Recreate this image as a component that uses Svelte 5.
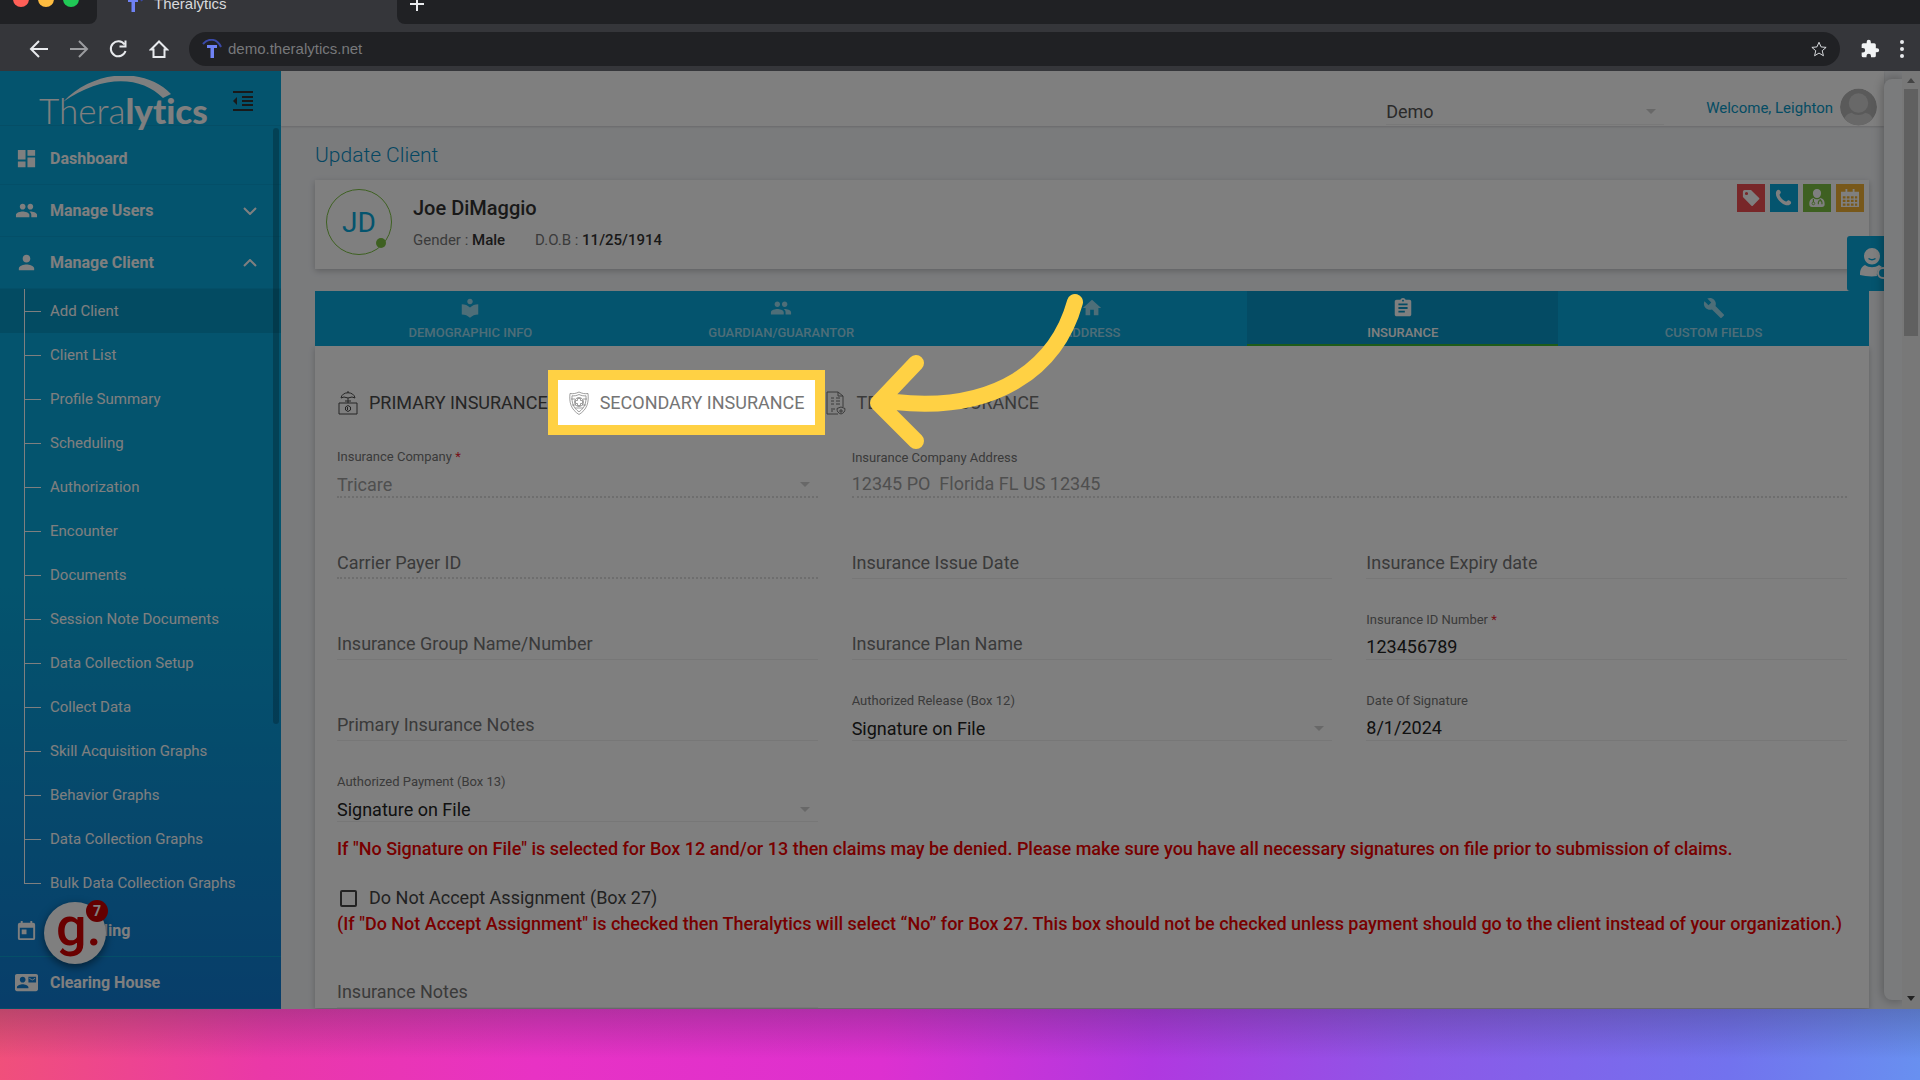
<script lang="ts">
	const clientLinks = [
		"Add Client",
		"Client List",
		"Profile Summary",
		"Scheduling",
		"Authorization",
		"Encounter",
		"Documents",
		"Session Note Documents",
		"Data Collection Setup",
		"Collect Data",
		"Skill Acquisition Graphs",
		"Behavior Graphs",
		"Data Collection Graphs",
		"Bulk Data Collection Graphs"
	];

	const icons = {
		dashboard: "M3 13h8V3H3v10zm0 8h8v-6H3v6zm10 0h8V11h-8v10zm0-18v6h8V3h-8z",
		people:
			"M16 11c1.66 0 2.99-1.34 2.99-3S17.66 5 16 5s-3 1.34-3 3 1.34 3 3 3zm-8 0c1.66 0 2.99-1.34 2.99-3S9.66 5 8 5 5 6.34 5 8s1.34 3 3 3zm0 2c-2.33 0-7 1.17-7 3.5V19h14v-2.500c0-2.330-4.670-3.500-7-3.500zm8 0c-.29 0-.62.02-.97.05 1.160.84 1.970 1.970 1.970 3.450V19h6v-2.500c0-2.330-4.670-3.500-7-3.500z",
		person: "M12 12c2.210 0 4-1.790 4-4s-1.790-4-4-4-4 1.790-4 4 1.790 4 4 4zm0 2c-2.670 0-8 1.340-8 4v2h16v-2c0-2.660-5.330-4-8-4z",
		event: "M19 4h-1V2h-2v2H8V2H6v2H5a2 2 0 0 0-2 2v14a2 2 0 0 0 2 2h14a2 2 0 0 0 2-2V6a2 2 0 0 0-2-2zm0 16H5V9h14v11zM7 11h5v5H7z",
		mail: "M21 8V7l-3 2-3-2v1l3 2 3-2zm1-5H2C.9 3 0 3.900 0 5v14c0 1.100.9 2 2 2h20c1.100 0 2-.9 2-2V5c0-1.100-.9-2-2-2zM8 6c1.660 0 3 1.340 3 3s-1.340 3-3 3-3-1.340-3-3 1.340-3 3-3zm6 12H2v-1c0-2 4-3.100 6-3.100s6 1.100 6 3.100v1zm8-6h-8V6h8v6z",
		reader:
			"M12 11.550C9.640 9.350 6.480 8 3 8v11c3.480 0 6.640 1.350 9 3.550 2.360-2.190 5.520-3.550 9-3.550V8c-3.480 0-6.640 1.350-9 3.550zM12 8c1.660 0 3-1.340 3-3s-1.340-3-3-3-3 1.340-3 3 1.340 3 3 3z",
		home: "M10 20v-6h4v6h5v-8h3L12 3 2 12h3v8z",
		assignment:
			"M19 3h-4.180C14.400 1.840 13.300 1 12 1s-2.400.84-2.820 2H5c-1.100 0-2 .9-2 2v14c0 1.100.9 2 2 2h14c1.100 0 2-.9 2-2V5c0-1.100-.9-2-2-2zm-7 0c.55 0 1 .45 1 1s-.45 1-1 1-1-.45-1-1 .45-1 1-1zm2 14H7v-2h7v2zm3-4H7v-2h10v2zm0-4H7V7h10v2z",
		build: "M22.700 19l-9.100-9.100c.9-2.300.4-5-1.500-6.900-2-2-5-2.400-7.400-1.300L9 6 6 9 1.600 4.700C.4 7.100.9 10.100 2.900 12.100c1.900 1.900 4.600 2.400 6.900 1.500l9.100 9.100c.4.4 1 .4 1.400 0l2.300-2.300c.5-.4.5-1.100.1-1.400z",
		phone: "M2 2.500C4.500-.4 7 1.500 7.800 4.500c.4 1.400-2 2.300-1.700 3.500.9 3.300 5.200 7.800 8.300 8.600 1.300.3 2.400-2.200 3.800-1.700 3.200 1.100 4.700 3.600 1.800 5.800C12.800 26-2.500 11.400 2 2.500z"
	};

	const tabs = [
		{ label: "DEMOGRAPHIC INFO", icon: icons.reader },
		{ label: "GUARDIAN/GUARANTOR", icon: icons.people },
		{ label: "ADDRESS", icon: icons.home },
		{ label: "INSURANCE", icon: icons.assignment },
		{ label: "CUSTOM FIELDS", icon: icons.build }
	];

	let activeTab = $state("INSURANCE");
	let activeLink = $state("Add Client");
	let insurance = $state("primary");
	let noAssignment = $state(false);
</script>

{#snippet icon(d: string)}
	<svg class="icon" viewBox="0 0 24 24" aria-hidden="true"><path {d} fill-rule="evenodd" /></svg>
{/snippet}

{#snippet favicon()}
	<svg class="favicon" viewBox="0 0 20 20" aria-hidden="true">
		<path d="M1 5C6-1 15-1 19 8" fill="none" stroke="#3a49a8" stroke-width="2" />
		<path d="M5 6h10v3h-3v10H8.500V9H5z" fill="#6f82f4" />
	</svg>
{/snippet}

{#snippet textField(id: string, label: string, value = "", disabled = false, required = false)}
	<div class="field" class:disabled>
		{#if value}
			<label for={id}>{label} {#if required}<span class="req">*</span>{/if}</label>
		{/if}
		<div class="control" class:filled={value !== ""}>
			<input {id} type="text" {value} {disabled} placeholder={value ? "" : label} aria-label={label} />
		</div>
	</div>
{/snippet}

{#snippet selectField(id: string, label: string, value: string, disabled = false, required = false)}
	<div class="field" class:disabled>
		<label for={id}>{label} {#if required}<span class="req">*</span>{/if}</label>
		<div class="control picker">
			<select {id} {disabled}><option>{value}</option></select>
			<span class="caret"></span>
		</div>
	</div>
{/snippet}

<div class="window">
	<header class="chrome">
		<div class="strip">
			<div class="lights"><i class="red"></i><i class="yellow"></i><i class="green"></i></div>
			<div class="browser-tab">{@render favicon()}<span>Theralytics</span></div>
			<div class="strip-rest">
				<button aria-label="New tab">
					<svg viewBox="0 0 16 16" width="16" height="16"><path d="M8 1v14M1 8h14" fill="none" stroke="#e8eaed" stroke-width="2" /></svg>
				</button>
			</div>
		</div>
		<div class="toolbar">
			<button aria-label="Back"><svg viewBox="0 0 20 20"><path d="M19 10H2M10 2l-8 8 8 8" stroke="#e8eaed" /></svg></button>
			<button aria-label="Forward"><svg viewBox="0 0 20 20"><path d="M1 10h17M10 2l8 8-8 8" stroke="#9b9c9f" /></svg></button>
			<button aria-label="Reload"><svg viewBox="0 0 20 20"><path d="M15.500 5.500A7.500 7.500 0 1 0 16.500 12M16.500 1.500v6h-6" stroke="#e8eaed" /></svg></button>
			<button aria-label="Home"><svg viewBox="0 0 20 20"><path d="M10 2.500L2 10.500h2.500V18h11v-7.500H18z" stroke="#e8eaed" /></svg></button>
			<div class="address">
				{@render favicon()}
				<input type="text" value="demo.theralytics.net" aria-label="Address" />
				<button aria-label="Bookmark"><svg viewBox="0 0 20 20"><path d="M10 2.500l2.300 5.200 5.600.5-4.300 3.700 1.300 5.600-4.900-3-4.900 3 1.300-5.600L2.100 8.200l5.600-.5z" stroke="#e8eaed" /></svg></button>
			</div>
			<button aria-label="Extensions">
				<svg viewBox="0 0 24 24"><path fill="#f1f3f4" d="M20.500 11H19V7a2 2 0 0 0-2-2h-4V3.500a2.500 2.500 0 0 0-5 0V5H4a2 2 0 0 0-2 2v3.800h1.500a2.700 2.700 0 0 1 0 5.400H2V20a2 2 0 0 0 2 2h3.800v-1.500a2.700 2.700 0 0 1 5.400 0V22H17a2 2 0 0 0 2-2v-4h1.500a2.500 2.500 0 0 0 0-5z" /></svg>
			</button>
			<button class="dots" aria-label="Menu"><i></i><i></i><i></i></button>
		</div>
	</header>

	<div class="viewport">
		<aside class="sidebar">
			<div class="brand">
				<a class="logo" href="#home">
					<span class="thin">Thera</span><span class="thick">lytics</span>
					<svg class="swoosh" viewBox="0 0 110 28" aria-hidden="true"><path d="M0 26C32-8 84-8 108 18l-8 4C78 0 40-2 0 26z" fill="#fff" /></svg>
				</a>
				<button class="collapse" aria-label="Collapse menu">
					<svg viewBox="0 0 20 20"><path d="M0 0h20v2H0zM9 5h11v2H9zM9 9h11v2H9zM9 13h11v2H9zM0 18h20v2H0zM4 6v8l-4-4z" /></svg>
				</button>
			</div>
			<nav class="menu">
				<a class="item" href="#dashboard">{@render icon(icons.dashboard)}<span>Dashboard</span></a>
				<a class="item" href="#users">
					{@render icon(icons.people)}<span>Manage Users</span>
					<svg class="chev" viewBox="0 0 14 8"><path d="M1 1l6 6 6-6" /></svg>
				</a>
				<a class="item" href="#client">
					{@render icon(icons.person)}<span>Manage Client</span>
					<svg class="chev" viewBox="0 0 14 8"><path d="M1 7l6-6 6 6" /></svg>
				</a>
				<ul class="sub">
					{#each clientLinks as link}
						<li class:active={link === activeLink}>
							<a href="#client" onclick={() => (activeLink = link)}>{link}</a>
						</li>
					{/each}
				</ul>
				<a class="item" href="#scheduling">{@render icon(icons.event)}<span>Scheduling</span></a>
				<a class="item" href="#clearing">{@render icon(icons.mail)}<span>Clearing House</span></a>
			</nav>
			<div class="menu-thumb"></div>
			<button class="guide" aria-label="Open guides">
				<span class="g">g.</span>
				<span class="count">7</span>
			</button>
		</aside>

		<main class="main">
			<div class="topbar">
				<div class="org">
					<select aria-label="Organization"><option>Demo</option></select>
					<span class="caret"></span>
				</div>
				<a class="welcome" href="#profile">Welcome, Leighton</a>
				<svg class="avatar" viewBox="0 0 38 38" aria-hidden="true">
					<defs><clipPath id="round"><circle cx="19" cy="19" r="19" /></clipPath></defs>
					<g clip-path="url(#round)">
						<circle cx="19" cy="19" r="19" fill="#b4b4b4" />
						<circle cx="19" cy="15" r="10" fill="#d0d0d0" />
						<path d="M2 38c2-10 6-12 10-13 4 3 10 3 14 0 4 1 8 3 10 13z" fill="#d0d0d0" />
					</g>
				</svg>
			</div>

			<div class="content">
				<h1>Update Client</h1>
				<section class="client card">
					<div class="initials">JD<i></i></div>
					<div class="who">
						<h2>Joe DiMaggio</h2>
						<p>
							<span>Gender : <b>Male</b></span>
							<span>D.O.B : <b>11/25/1914</b></span>
						</p>
					</div>
					<div class="actions">
						<button class="tag" aria-label="Tags">
							<svg viewBox="0 0 20 20"><path fill-rule="evenodd" d="M1 3a2 2 0 0 1 2-2h7l9 9a1 1 0 0 1 0 1.500L12 18.500a1 1 0 0 1-1.500 0L1 9zm4 .2a1.800 1.800 0 1 0 0 3.600 1.800 1.800 0 0 0 0-3.600z" /></svg>
						</button>
						<button class="call" aria-label="Call">{@render icon(icons.phone)}</button>
						<button class="doctor" aria-label="Provider">
							<svg viewBox="0 0 20 20">
								<path d="M10 0a4.500 4.500 0 0 1 4.500 5c0 3-2 5-4.500 5S5.500 8 5.500 5A4.500 4.500 0 0 1 10 0zM6 10c2 2 6 2 8 0 4 1 4.500 4 4.500 7 0 2-1 3-3 3h-11c-2 0-3-1-3-3 0-3 .5-6 4.500-7z" />
								<path d="M6 11v5M13.500 11v2M11.500 17v-2a2 2 0 0 1 4 0v2" fill="none" stroke="#7cc142" stroke-width="1.300" />
								<circle cx="6" cy="16" r="1.500" fill="#fff" stroke="#7cc142" />
							</svg>
						</button>
						<button class="cal" aria-label="Calendar">
							<svg viewBox="0 0 20 20"><path fill-rule="evenodd" d="M5 0h2v3h6V0h2v3h5v17H0V3h5zM2 8v2.500h3V8zm4.500 0v2.500H9.500V8zm4.500 0v2.500h3V8zm4.500 0v2.500H18V8zM2 12v2.500h3V12zm4.500 0v2.500H9.500V12zm4.500 0v2.500h3V12zm4.500 0v2.500H18V12zM2 16v2.500h3V16zm4.500 0v2.500H9.500V16zm4.500 0v2.500h3V16zm4.500 0v2.500H18V16z" /></svg>
						</button>
					</div>
				</section>

				<div class="tabs">
					{#each tabs as tab}
						<button class:active={tab.label === activeTab} onclick={() => (activeTab = tab.label)}>
							{@render icon(tab.icon)}
							<span>{tab.label}</span>
						</button>
					{/each}
				</div>

				<form class="card body">
					<div class="plans">
						<button type="button" class:current={insurance === "primary"} onclick={() => (insurance = "primary")}>
							<svg viewBox="0 0 20 24"><path d="M1 12h18v11H1zM10 0v2M3 7c1-7 13-7 14 0l-3-1-4 1-4-1zM10 7v5M7 10h6M10 14.500l2.500 1.500v3L10 20.500 7.500 19v-3zM9.500 16v3" /></svg>
							<span>PRIMARY INSURANCE</span>
						</button>
						<button type="button" class:current={insurance === "secondary"} onclick={() => (insurance = "secondary")}>
							<svg class="shield" viewBox="0 0 20 24">
								<path d="M10 1c3 1.500 6 2 9 1.500 1 9-1 16-9 21-8-5-10-12-9-21C4 3 7 2.500 10 1z" />
								<path d="M10 3.500c2.500 1.200 4.500 1.500 7 1.300.4 7-1.500 12.500-7 16-5.500-3.500-7.400-9-7-16 2.500.2 4.500-.1 7-1.300z" />
								<circle cx="10" cy="11" r="4.500" />
								<path d="M8.500 7.500h3v2h2v3h-2v2h-3v-2h-2v-3h2zM2 8h4M14 8h4M3 14h4M13 14h4M6 17h8" />
							</svg>
							<span>SECONDARY INSURANCE</span>
							<i class="spotlight"></i>
							<svg class="pointer" viewBox="0 0 230 170" aria-hidden="true">
								<path d="M215 17C197 82 137 128 35 117M56 78L18 118l38 38" />
							</svg>
						</button>
						<button type="button" class:current={insurance === "tertiary"} onclick={() => (insurance = "tertiary")}>
							<svg viewBox="0 0 20 24"><path d="M12 23H1V1h11l5 4v11M12 1v4h5M5 7h3M10 7h4M5 10h3M10 10h4M5 13h3M10 13h4M5 18h4M5 20h2M15 16l4 1.500c0 3-1 4.500-4 5.500-3-1-4-2.500-4-5.500zM15 18v4M13 20h4" /></svg>
							<span>TERTIARY INSURANCE</span>
						</button>
					</div>

					<div class="grid">
						{@render selectField("company", "Insurance Company", "Tricare", true, true)}
						<div class="wide">{@render textField("address", "Insurance Company Address", "12345 PO  Florida FL US 12345", true)}</div>
						<div class="dotted">{@render textField("payer", "Carrier Payer ID")}</div>
						{@render textField("issue", "Insurance Issue Date")}
						{@render textField("expiry", "Insurance Expiry date")}
						{@render textField("group", "Insurance Group Name/Number")}
						{@render textField("plan", "Insurance Plan Name")}
						{@render textField("idnum", "Insurance ID Number", "123456789", false, true)}
						{@render textField("pnotes", "Primary Insurance Notes")}
						{@render selectField("release", "Authorized Release (Box 12)", "Signature on File")}
						{@render textField("signed", "Date Of Signature", "8/1/2024")}
						{@render selectField("payment", "Authorized Payment (Box 13)", "Signature on File")}
					</div>
					<p class="warn">
						If "No Signature on File" is selected for Box 12 and/or 13 then claims may be denied. Please make sure you have all necessary signatures on file
						prior to submission of claims.
					</p>
					<label class="check">
						<input type="checkbox" bind:checked={noAssignment} />
						<span>Do Not Accept Assignment (Box 27)</span>
					</label>
					<p class="warn tight">
						(If "Do Not Accept Assignment" is checked then Theralytics will select “No” for Box 27. This box should not be checked unless payment should go to
						the client instead of your organization.)
					</p>
					<div class="grid">{@render textField("notes", "Insurance Notes")}</div>
				</form>
			</div>
		</main>

		<button class="assist" aria-label="Client assistant">
			<svg viewBox="0 0 30 32">
				<path d="M12 0a8 8 0 0 1 8 8c0 5-4 8.500-8 8.500S4 13 4 8a8 8 0 0 1 8-8zM5 17c4 3 10 3 14 0l3 2a8 8 0 0 0-5 9c-6 1-12 0-17-1 0-5 1-8 5-10z" />
				<path d="M8.500 10.500c2 1.500 5 1.500 7 0" fill="none" stroke="#08a8dc" stroke-width="1.500" />
				<circle cx="23" cy="25" r="5" fill="none" stroke="#fff" stroke-width="2" />
			</svg>
		</button>
		<div class="drawer"></div>
		<div class="scrollbar"><i class="up"></i><i class="thumb"></i><i class="down"></i></div>
	</div>

	<footer class="backdrop"></footer>
</div>

<style>
	:global(body) { margin: 0; font-family: Roboto, "Liberation Sans", sans-serif; }
	button { font-family: inherit; border: 0; padding: 0; background: none; cursor: pointer; }
	a { color: inherit; text-decoration: none; }
	i { display: block; }
	input, select { font: inherit; color: inherit; border: 0; outline: 0; padding: 0; margin: 0; background: none; min-width: 0; opacity: 1; appearance: none; }
	.window { height: 100vh; display: flex; flex-direction: column; overflow: hidden; }

	/* browser chrome */
	.chrome { background: #35363a; flex-shrink: 0; font-family: "Liberation Sans", sans-serif; font-size: 15px; }
	.strip { display: flex; height: 50px; margin-top: -26px; }
	.lights { display: flex; align-items: center; gap: 9px; width: 84px; padding-left: 13px; background: #202124; border-radius: 0 0 8px 0; }
	.lights i { width: 16px; height: 16px; border-radius: 50%; }
	.red { background: #ff5f57; }
	.yellow { background: #febc40; }
	.green { background: #20c956; }
	.browser-tab { display: flex; align-items: center; gap: 11px; box-sizing: border-box; width: 300px; padding: 8px 0 0 26px; color: #d8d9dc; }
	.favicon { width: 20px; height: 20px; flex-shrink: 0; }
	.strip-rest { flex: 1; display: flex; align-items: center; padding: 10px 0 0 12px; background: #202124; border-radius: 0 0 0 8px; }
	.strip-rest svg { display: block; }
	.toolbar { display: flex; align-items: center; height: 47px; padding: 2px 12px 0 29px; box-sizing: border-box; gap: 20px; }
	.toolbar button { display: block; }
	.toolbar svg { display: block; width: 20px; height: 20px; fill: none; stroke-width: 2; }
	.address { flex: 1; display: flex; align-items: center; gap: 6px; height: 34px; padding: 0 12px 0 13px; border-radius: 17px; background: #202124; }
	.address input { flex: 1; color: #77787b; }
	.address button svg { stroke-width: 1; width: 18px; height: 18px; }
	.toolbar .dots { display: grid; gap: 3px; padding: 0 4px; margin-left: -4px; }
	.dots i { width: 4px; height: 4px; border-radius: 50%; background: #e8eaed; }

	.viewport { flex: 1; min-height: 0; display: flex; position: relative; overflow: hidden; background: #f4f6f9; }

	/* sidebar */
	.sidebar { position: relative; width: 281px; flex-shrink: 0; overflow: hidden; color: #fff; background: linear-gradient(#08a8dc 0, #08a8dc 55%, #107cd4 100%); }
	.brand { display: flex; justify-content: space-between; align-items: flex-start; height: 55px; padding: 0 28px 0 39px; box-sizing: border-box; border-bottom: 1px solid #0a9ccd; }
	.logo { position: relative; padding-top: 19px; font-family: Lato, sans-serif; font-size: 35px; line-height: 40px; white-space: nowrap; font-variant-ligatures: none; }
	.thin { font-weight: 300; }
	.thick { font-weight: 900; }
	.swoosh { position: absolute; left: 24px; top: 5px; width: 110px; height: 28px; }
	.collapse { margin-top: 20px; }
	.collapse svg { display: block; width: 20px; height: 20px; fill: #333; }
	.menu { padding-top: 7px; font-size: 16px; }
	.item { display: flex; align-items: center; height: 52px; padding: 0 24px 0 15px; box-sizing: border-box; border-bottom: 1px solid #099fd1; font-weight: 700; }
	.item span { flex: 1; margin-left: 12px; }
	.item .icon { width: 23px; height: 23px; fill: #fff; }
	.chev { width: 14px; height: 8px; fill: none; stroke: #fff; stroke-width: 2; }
	.sub { list-style: none; margin: 0; padding: 0; font-size: 15px; }
	.sub li { position: relative; height: 44px; }
	.sub li.active { background: rgba(0, 0, 0, 0.1); }
	.sub li::before { content: ""; position: absolute; left: 24px; top: 0; width: 1px; height: 100%; background: #fff; }
	.sub li:last-child::before { height: 50%; }
	.sub li::after { content: ""; position: absolute; left: 24px; top: 22px; width: 17px; height: 1px; background: #fff; }
	.sub a { display: block; padding-left: 50px; line-height: 44px; }
	.menu-thumb { position: absolute; right: 2px; top: 57px; width: 6px; height: 596px; border-radius: 3px; background: rgba(0, 0, 0, 0.22); }
	.guide { position: absolute; left: 44px; bottom: 45px; width: 62px; height: 62px; border-radius: 50%; background: #fff; color: #d40000; box-shadow: 0 3px 8px rgba(0, 0, 0, 0.5); }
	.g { display: block; padding-left: 12px; font-size: 54px; line-height: 38px; height: 50px; font-weight: 500; text-align: left; }
	.count { position: absolute; right: -2px; top: -2px; width: 22px; border-radius: 50%; background: #c80000; color: #fff; font-size: 14px; font-weight: 700; line-height: 22px; }

	/* main column */
	.main { flex: 1; min-width: 0; margin-right: 36px; display: flex; flex-direction: column; }
	.topbar { display: flex; align-items: flex-end; justify-content: flex-end; height: 55px; flex-shrink: 0; padding-right: 7px; background: #fff; box-shadow: 0 1px 2px rgba(0, 0, 0, 0.15); }
	.org { display: flex; align-items: center; width: 278px; height: 26px; margin: 0 42px 1px 0; border-bottom: 1px solid #f0f0f0; color: #555; font-size: 18px; }
	.org select { flex: 1; }
	.caret { width: 0; height: 0; margin-right: 8px; border: 5px solid transparent; border-top-color: #d0d0d0; border-bottom: 0; }
	.welcome { color: #0899c8; font-size: 15px; line-height: 36px; margin-right: 7px; }
	.avatar { width: 37px; height: 38px; }
	.content { padding: 0 15px 0 34px; }
	h1 { margin: 0; padding: 14px 0 10px; font-size: 21px; line-height: 30px; font-weight: 300; color: #0a8ec4; }
	.card { background: #fff; box-shadow: 0 2px 6px rgba(0, 0, 0, 0.22); }
	.client { display: flex; align-items: flex-start; height: 89px; }
	.initials { position: relative; width: 64px; height: 64px; margin: 9px 0 0 11px; border: 1px solid #7cc142; border-radius: 50%; color: #08a8dc; font-size: 28px; line-height: 65px; text-align: center; }
	.initials i { position: absolute; right: 5px; bottom: 6px; width: 10px; height: 10px; border-radius: 50%; background: #7cc142; }
	.who { flex: 1; padding: 14px 0 0 21px; }
	h2 { margin: 0; font-size: 20px; line-height: 28px; font-weight: 500; color: #333; }
	.who p { display: flex; gap: 30px; margin: 8px 0 0; font-size: 15px; line-height: 20px; color: #777; }
	.who b { font-weight: 500; color: #333; }
	.actions { display: flex; gap: 5px; padding: 4px 5px 0 0; }
	.actions button { display: grid; place-items: center; width: 28px; height: 28px; }
	.actions svg { width: 18px; height: 18px; fill: #fff; }
	.actions .tag { background: #f04f52; }
	.actions .call { background: #08a8dc; }
	.actions .doctor { background: #7cc142; }
	.actions .cal { background: #f0b034; }
	.tabs { display: flex; margin-top: 22px; }
	.tabs button { flex: 1; height: 55px; box-sizing: border-box; padding-top: 4px; border-bottom: 2px solid transparent; background: #08a8dc border-box; color: rgba(255, 255, 255, 0.6); font-size: 13px; font-weight: 500; }
	.tabs button.active { background-color: #0897c8; border-color: #3cb834; color: #fff; }
	.tabs .icon { display: block; width: 22px; height: 22px; margin: 0 auto 4px; fill: currentColor; }
	.tabs span { display: block; line-height: 20px; }
	.body { padding: 34px 22px 0; }
	.plans { display: flex; margin-left: -10px; }
	.plans button { position: relative; display: flex; align-items: center; gap: 11px; height: 45px; padding: 0 10px 0 11px; color: #757575; font-size: 18px; white-space: nowrap; }
	.plans .current { color: #4a4a4a; }
	.plans svg { width: 20px; height: 24px; fill: none; stroke: currentColor; stroke-width: 1; }
	.plans .shield { stroke-width: 0.7; }
	.spotlight { position: absolute; z-index: 10; inset: 0; border: 10px solid #ffd144; margin: -10px; box-shadow: 0 0 0 3000px rgba(0, 0, 0, 0.5); }
	.plans .pointer { position: absolute; z-index: 11; left: calc(100% + 45px); top: -95px; width: 230px; height: 170px; stroke: #ffd144; stroke-width: 16; stroke-linecap: round; stroke-linejoin: round; }
	.grid { display: grid; grid-template-columns: repeat(3, 1fr); column-gap: 34px; row-gap: 32px; padding-top: 24px; }
	.wide { grid-column: span 2; }
	.field { display: flex; flex-direction: column; justify-content: flex-end; height: 49px; }
	.field label { color: #757575; font-size: 13px; line-height: 18px; }
	.req { color: #f02030; }
	.control { display: flex; align-items: center; height: 32px; box-sizing: border-box; border-bottom: 1px solid #eee; font-size: 18px; color: #222; }
	.filled { padding-top: 4px; }
	.picker { padding-top: 6px; }
	.control input, .control select { flex: 1; height: 24px; }
	.control input::placeholder { color: #757575; opacity: 1; }
	.disabled .control { color: #9e9e9e; border-bottom: 2px dotted #dcdcdc; }
	.dotted .control { border-bottom: 2px dotted #dcdcdc; }
	.warn { margin: 16px 0 0; color: #f00000; font-size: 18px; line-height: 22px; font-weight: 500; white-space: nowrap; }
	.check { display: flex; align-items: center; gap: 12px; margin-top: 26px; padding-left: 3px; font-size: 18px; line-height: 24px; color: #444; }
	.check input { width: 17px; height: 17px; border: 2px solid #444; border-radius: 2px; }
	.check input:checked { background: #08a8dc; }
	.tight { margin-top: 3px; }

	/* right edge */
	.assist { position: absolute; right: 36px; top: 165px; width: 37px; height: 55px; padding-left: 13px; overflow: hidden; border-radius: 3px 0 0 3px; background: #08a8dc; }
	.assist svg { display: block; width: 30px; height: 32px; fill: #fff; }
	.drawer { position: absolute; right: 17px; top: 8px; bottom: 9px; width: 19px; border-radius: 8px 0 0 8px; background: #f4f6f9; box-shadow: 0 0 12px rgba(0, 0, 0, 0.35); }
	.scrollbar { position: absolute; right: 0; top: 0; bottom: 0; width: 18px; box-sizing: border-box; display: flex; flex-direction: column; align-items: center; padding: 7px 0 8px; background: #f1f1f1; }
	.up, .down { border: 4px solid transparent; }
	.up { border-top: 0; border-bottom: 5px solid #888; }
	.down { border-bottom: 0; border-top: 5px solid #444; margin-top: auto; }
	.thumb { width: 14px; height: 247px; margin-top: 6px; background: #c1c1c1; }

	.backdrop { flex-shrink: 0; height: 71px; background: linear-gradient(rgba(40, 40, 60, 0.26), transparent 70%), linear-gradient(95deg, #f0507a 0, #ea38a8 14%, #e832c4 28%, #dd30d0 46%, #b038e0 60%, #8c58e8 74%, #7272ee 90%, #6890f0 100%); }
</style>
